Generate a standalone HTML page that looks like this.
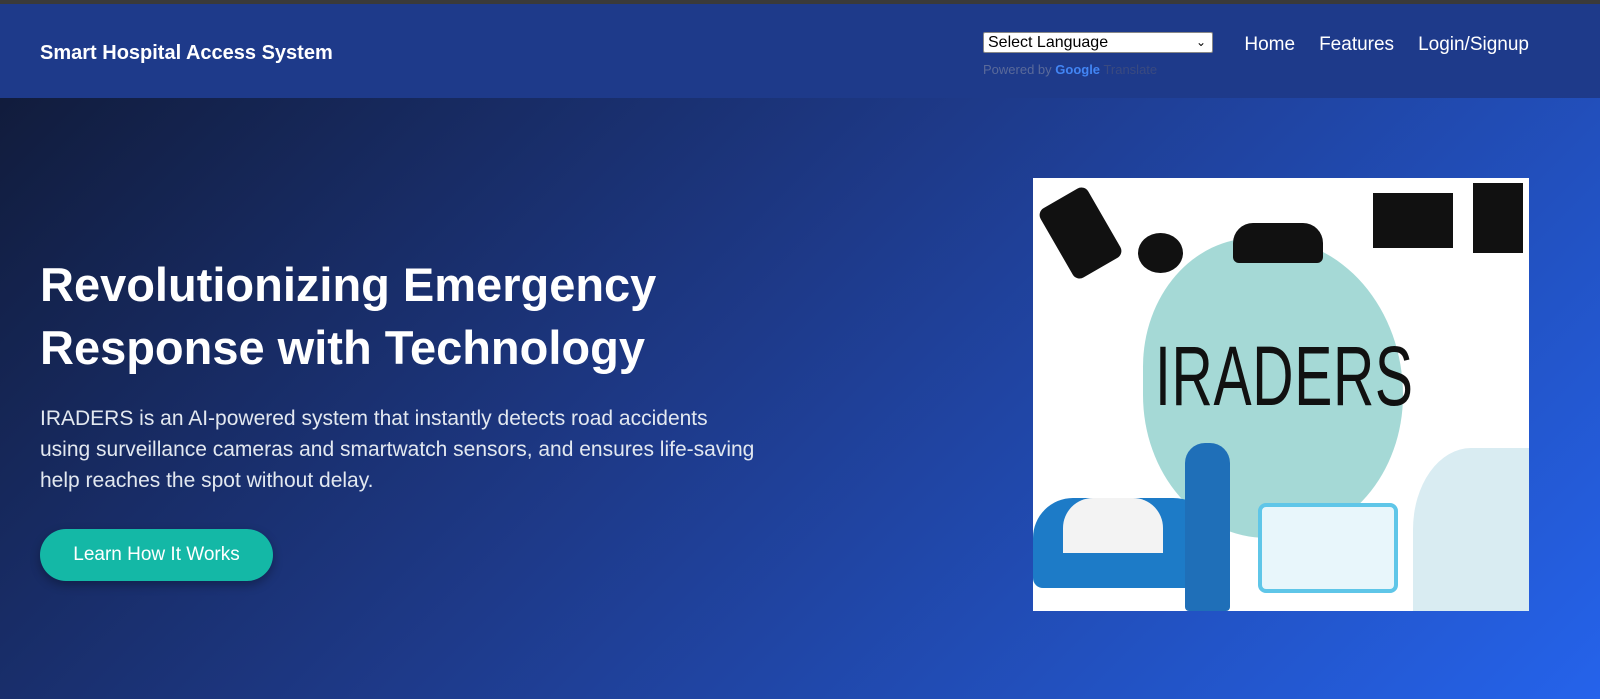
<!DOCTYPE html>
<html><head><meta charset="utf-8"><style>
*{margin:0;padding:0;box-sizing:border-box}
body{width:1600px;height:699px;overflow:hidden;font-family:"Liberation Sans",sans-serif;background:#2563eb}
.top{height:4px;background:#3a3a3a}
header{height:94px;background:#1e3a8a;position:relative;color:#fff}
.brand{position:absolute;left:40px;top:38px;font-size:20px;font-weight:bold}
.sel{position:absolute;left:983px;top:28px;width:230px;height:21px;background:#fff;border:1px solid #888;border-radius:2px;color:#000;font-size:16px;padding:1px 4px;line-height:18px}
.sel span{position:absolute;right:6px;top:0;font-size:12px}
.pw{position:absolute;left:983px;top:58px;font-size:13px;color:#5a6a9a}
.pw b{color:#4285f4}
.pw i{font-style:normal;color:#3a4a80}
nav{position:absolute;right:71px;top:30px;font-size:19px}
nav a{margin-left:24px;color:#fff}
.hero{position:absolute;top:98px;left:0;width:1600px;height:601px;background:linear-gradient(135deg,#111c3c 0%,#1e3a8a 45%,#2563eb 100%)}
h1{position:absolute;left:40px;top:155px;font-size:47px;line-height:63px;color:#fff;font-weight:bold;width:800px}
.para{position:absolute;left:40px;top:305px;width:800px;font-size:21px;line-height:31px;color:#e2e8f0;white-space:nowrap}
.btn{position:absolute;left:40px;top:431px;width:233px;height:52px;border-radius:26px;background:#14b8a6;color:#fff;font-size:19px;text-align:center;line-height:52px;box-shadow:0 4px 10px rgba(0,0,0,.3)}
.img{position:absolute;left:1033px;top:80px;width:496px;height:433px;background:#fff;overflow:hidden}
.blob{position:absolute;left:110px;top:60px;width:260px;height:300px;background:#8ecfcc;border-radius:45% 55% 50% 50%;opacity:.8}
.ir{position:absolute;left:122px;top:150px;font-size:84px;color:#111;letter-spacing:1px;transform:scaleX(.68);transform-origin:left top}
</style></head><body>
<div class="top"></div>
<header><div class="brand">Smart Hospital Access System</div>
<div class="sel">Select Language<span>&#8964;</span></div>
<div class="pw">Powered by <b>Google</b> <i>Translate</i></div>
<nav><a>Home</a><a>Features</a><a>Login/Signup</a></nav></header>
<div class="hero">
<h1>Revolutionizing Emergency Response with Technology</h1>
<div class="para">IRADERS is an AI-powered system that instantly detects road accidents<br>using surveillance cameras and smartwatch sensors, and ensures life-saving<br>help reaches the spot without delay.</div>
<div class="btn">Learn How It Works</div>
<div class="img">
<div class="blob"></div>
<div class="ir">IRADERS</div>
<div style="position:absolute;left:20px;top:15px;width:55px;height:80px;background:#111;transform:rotate(-30deg);border-radius:8px"></div>
<div style="position:absolute;left:200px;top:45px;width:90px;height:40px;background:#111;border-radius:20px 20px 6px 6px"></div>
<div style="position:absolute;left:340px;top:15px;width:80px;height:55px;background:#111"></div>
<div style="position:absolute;left:440px;top:5px;width:50px;height:70px;background:#111"></div>
<div style="position:absolute;left:105px;top:55px;width:45px;height:40px;background:#111;border-radius:50%"></div>
<div style="position:absolute;left:0;top:320px;width:190px;height:90px;background:#1d7bc7;border-radius:40px 50px 10px 10px"></div>
<div style="position:absolute;left:30px;top:320px;width:100px;height:55px;background:#f3f3f3;border-radius:30px 30px 0 0"></div>
<div style="position:absolute;left:152px;top:265px;width:45px;height:168px;background:#1f6fb8;border-radius:20px 20px 4px 4px"></div>
<div style="position:absolute;left:225px;top:325px;width:140px;height:90px;background:#e8f6fb;border:4px solid #5fc6e8;border-radius:8px"></div>
<div style="position:absolute;left:380px;top:270px;width:116px;height:163px;background:#d9ecf2;border-radius:50% 0 0 0"></div>
</div>
</div>
</body></html>
